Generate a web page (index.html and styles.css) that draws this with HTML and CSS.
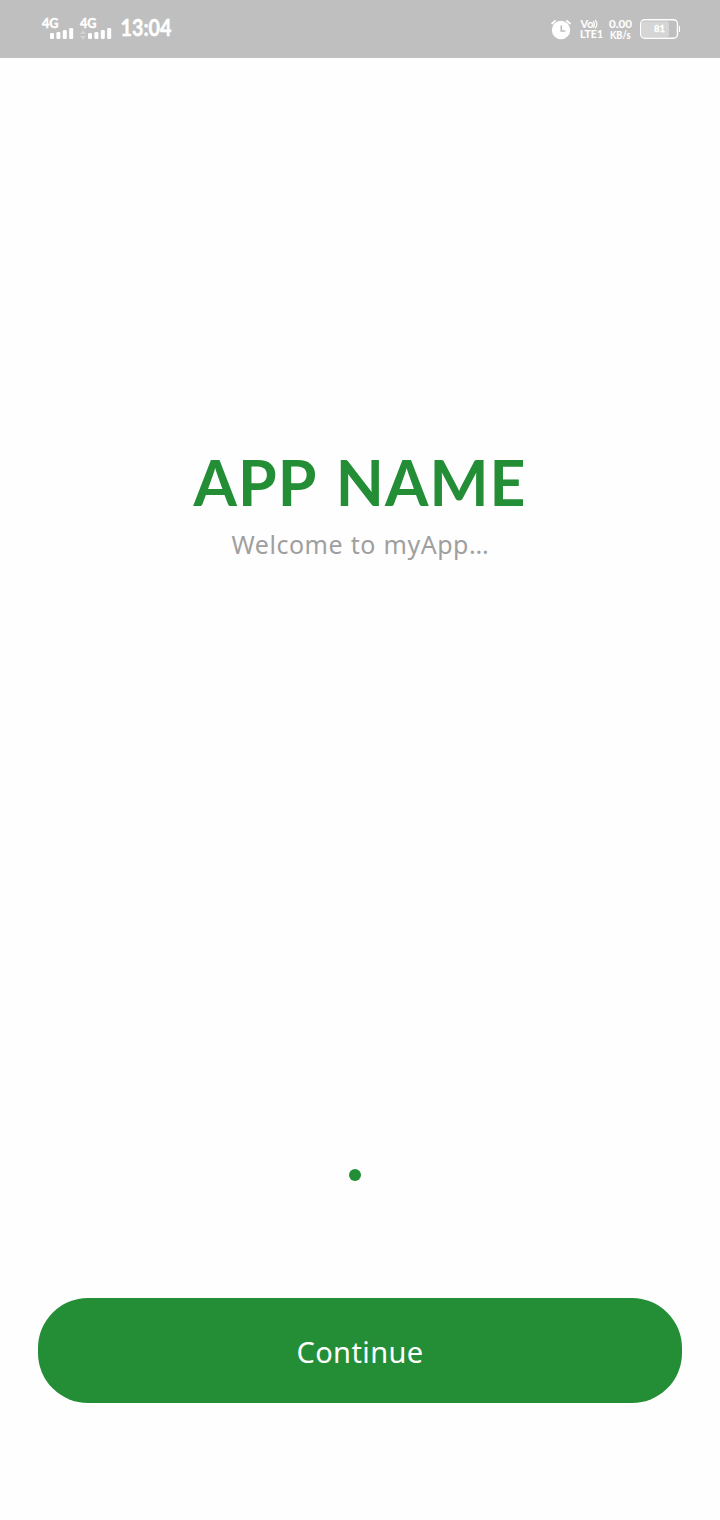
FILE: index.html
```html
<!DOCTYPE html>
<html lang="en">
<head>
<meta charset="utf-8">
<title>App Name</title>
<link rel="stylesheet" href="styles.css">
</head>
<body>
<div class="screen">
  <header class="status">
    <svg class="status-art" width="720" height="58" viewBox="0 0 720 58">
      <g class="network">
        <text x="42" y="28" textLength="16.5" lengthAdjust="spacingAndGlyphs">4G</text>
        <text x="80" y="28" textLength="16.5" lengthAdjust="spacingAndGlyphs">4G</text>
      </g>
      <g fill="#fff">
        <rect x="50" y="33" width="4" height="6" rx="1.3"/>
        <rect x="56.4" y="32" width="4" height="7" rx="1.3"/>
        <rect x="62.8" y="30" width="4" height="9" rx="1.3"/>
        <rect x="69.2" y="28" width="4" height="11" rx="1.3"/>
        <rect x="88" y="33" width="4" height="6" rx="1.3"/>
        <rect x="94.4" y="32" width="4" height="7" rx="1.3"/>
        <rect x="100.8" y="30" width="4" height="9" rx="1.3"/>
        <rect x="107.2" y="28" width="4" height="11" rx="1.3"/>
      </g>
      <path d="M80 34l3-4 3 4zM80 36l3 4 3-4z" fill="#d2d2d2"/>
      <text class="clock" x="120.5" y="36" textLength="51" lengthAdjust="spacingAndGlyphs">13:04</text>
      <circle cx="561" cy="30" r="9.2" fill="#fff"/>
      <path d="M551.5 24l4.2-3.6M570.5 24l-4.2-3.6" stroke="#fff" stroke-width="1.8" fill="none"/>
      <path d="M561.3 25.5v5.5h4" stroke="#bfbfbf" stroke-width="1.7" fill="none"/>
      <g class="tiny">
        <text x="580.5" y="28" textLength="13" lengthAdjust="spacingAndGlyphs">Vo</text>
        <text x="580" y="38" textLength="23" lengthAdjust="spacingAndGlyphs">LTE1</text>
        <text x="609" y="28" textLength="23" lengthAdjust="spacingAndGlyphs">0.00</text>
        <text x="610" y="39" textLength="20.5" lengthAdjust="spacingAndGlyphs">KB/s</text>
      </g>
      <path d="M593.4 21q2 3.3 0 6.6M595.2 19.8q3.4 4.2 0 8.6" stroke="#fff" stroke-width="1.2" fill="none"/>
      <rect x="642" y="21.5" width="27" height="15.5" rx="2" fill="#d5d5d5"/>
      <rect x="640.7" y="19.7" width="36.8" height="18.6" rx="4" fill="none" stroke="#fff" stroke-width="1.4"/>
      <rect x="679" y="26" width="1" height="6" fill="#fff"/>
      <text class="battery" x="654" y="32" textLength="11" lengthAdjust="spacingAndGlyphs">81</text>
    </svg>
  </header>
  <main class="intro">
    <h1 class="title">APP NAME</h1>
    <p class="subtitle">Welcome to myApp<span class="ellipsis">...</span></p>
  </main>
  <div class="pager"><span class="dot"></span></div>
  <button class="continue" type="button">Continue</button>
</div>
</body>
</html>
```
FILE: styles.css
```css
body { margin: 0; background: #fefefe; }
.screen { display: flex; flex-direction: column; align-items: center; width: 720px; height: 1520px; background: #fefefe; font-family: Lato, sans-serif; }
.status { width: 720px; height: 58px; background: #bfbfbf; }
.status-art { display: block; }
.status-art text { fill: #fff; stroke: #fff; font-family: Lato, sans-serif; }
.network { font-size: 12.5px; font-weight: 700; stroke-width: .4px; }
.clock { font-size: 22px; font-weight: 700; stroke-width: .5px; }
.tiny { font-size: 10.5px; font-weight: 700; stroke-width: .1px; }
.battery { font-size: 10px; font-weight: 700; stroke-width: .3px; }
.intro { display: flex; flex-direction: column; align-items: center; height: 1111px; box-sizing: border-box; padding-top: 384px; }
.title { margin: 0; font-size: 62.5px; line-height: 80px; font-weight: 700; letter-spacing: 1px; word-spacing: 4px; color: #238e36; white-space: nowrap; }
.subtitle { margin: 2px 0 0; font-family: "Noto Sans", sans-serif; font-size: 25px; line-height: 40px; letter-spacing: .5px; word-spacing: .7px; color: #9f9f9f; white-space: nowrap; }
.ellipsis { letter-spacing: -.2px; }
.pager { width: 12px; margin-right: 10px; }
.dot { display: block; width: 12px; height: 12px; border-radius: 50%; background: #238e36; }
.continue { width: 644px; height: 105px; margin: 117px 0 0; padding: 2px 0 0; border: 0; border-radius: 50px; background: #238e36; color: #fff; font: 400 29px/40px "Noto Sans", sans-serif; letter-spacing: .4px; }
```
